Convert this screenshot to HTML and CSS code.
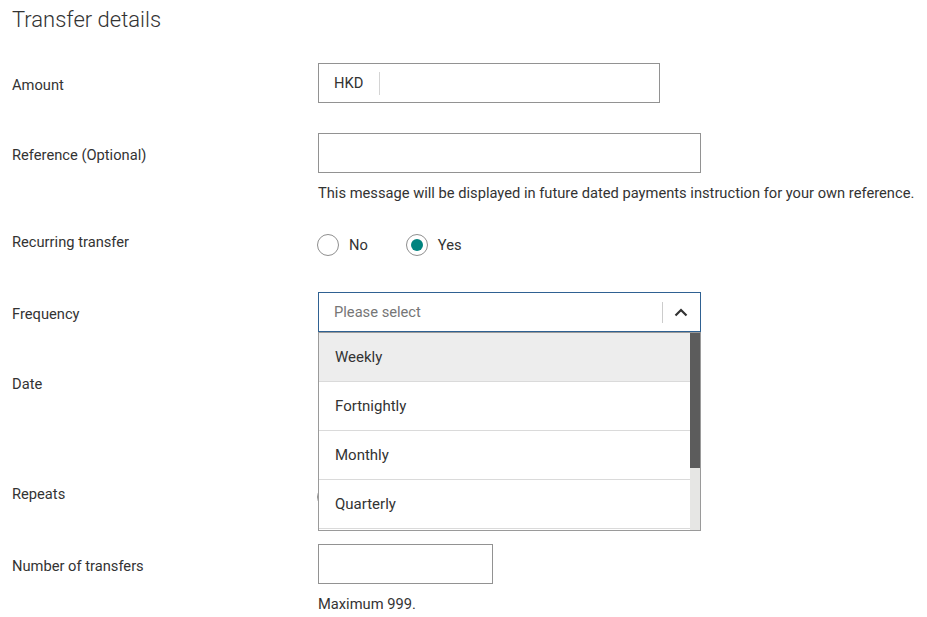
FILE: index.html
```html
<!DOCTYPE html>
<html lang="en">
<head>
<meta charset="utf-8">
<title>Transfer details</title>
<link rel="stylesheet" href="styles.css">
</head>
<body>
<main class="page">
  <h1 class="title">Transfer details</h1>
  <div class="form">
    <div class="row row-amount">
      <div class="label label-input">Amount</div>
      <div class="field">
        <div class="input input-amount">
          <span class="ccy">HKD</span>
          <span class="ccy-sep"></span>
        </div>
      </div>
    </div>

    <div class="row row-ref">
      <div class="label label-input">Reference (Optional)</div>
      <div class="field">
        <div class="input input-wide"></div>
        <p class="help">This message will be displayed in future dated payments instruction for your own reference.</p>
      </div>
    </div>

    <div class="row row-radio">
      <div class="label label-radio">Recurring transfer</div>
      <div class="field">
        <div class="radios">
          <span class="radio-opt"><span class="radio"></span><span class="radio-text">No</span></span>
          <span class="radio-opt"><span class="radio radio-on"></span><span class="radio-text">Yes</span></span>
        </div>
      </div>
    </div>

    <div class="row row-freq">
      <div class="label label-input">Frequency</div>
      <div class="field">
        <div class="select-wrap">
          <div class="select">
            <span class="placeholder">Please select</span>
            <span class="select-sep"></span>
            <span class="chev">
              <svg width="14" height="9" viewBox="0 0 14 9"><path d="M1.5 7.5 L7 2 L12.5 7.5" fill="none" stroke="#333" stroke-width="2.2"/></svg>
            </span>
          </div>
          <div class="menu">
            <ul class="menu-list">
              <li class="menu-item menu-item-active">Weekly</li>
              <li class="menu-item">Fortnightly</li>
              <li class="menu-item">Monthly</li>
              <li class="menu-item">Quarterly</li>
              <li class="menu-item"></li>
            </ul>
            <div class="scrollbar"><div class="thumb"></div></div>
          </div>
        </div>
      </div>
    </div>

    <div class="row row-date">
      <div class="label label-input">Date</div>
      <div class="field date-field">
        <div class="input input-short"></div>
      </div>
    </div>

    <div class="row row-radio">
      <div class="label label-radio">Repeats</div>
      <div class="field">
        <div class="radios">
          <span class="radio-opt"><span class="radio"></span></span>
        </div>
      </div>
    </div>

    <div class="row row-num">
      <div class="label label-input">Number of transfers</div>
      <div class="field">
        <div class="input input-short"></div>
        <p class="help">Maximum 999.</p>
      </div>
    </div>
  </div>
</main>
</body>
</html>
```

FILE: styles.css
```css
* { box-sizing: border-box; }

html, body {
  margin: 0;
  padding: 0;
  background: #ffffff;
}

body {
  font-family: Roboto, "Liberation Sans", Arial, sans-serif;
  color: #333333;
  font-size: 14.7px;
}

.page {
  padding: 6px 0 0 12px;
  width: 927px;
  height: 617px;
  overflow: hidden;
}

.title {
  margin: 0;
  font-size: 22px;
  line-height: 28px;
  font-weight: 300;
  color: #333333;
}

.form {
  display: flex;
  flex-direction: column;
  gap: 30px;
  margin-top: 29px;
}

.row {
  display: grid;
  grid-template-columns: 306px 1fr;
  align-items: start;
}

.label {
  font-size: 14.7px;
  color: #333333;
}

.label-input { line-height: 44px; height: 40px; }
.label-radio { line-height: 22px; }

.field { position: relative; }

.input {
  height: 40px;
  border: 1px solid #929292;
  background: #fff;
}

.input-amount {
  width: 342px;
  display: flex;
  align-items: center;
  padding-left: 15px;
}

.ccy { font-size: 14.7px; color: #333; }

.ccy-sep {
  width: 1px;
  height: 23px;
  background: #d4d4d4;
  margin-left: 16px;
}

.input-wide { width: 383px; }
.input-short { width: 175px; }

.help {
  margin: 12px 0 0;
  font-size: 14.7px;
  line-height: 16px;
  color: #333333;
}

.radios {
  display: flex;
  align-items: center;
  padding: 3px 0 6px;
  margin-left: -1px;
}

.radio-opt {
  display: flex;
  align-items: center;
  margin-right: 38px;
}

.radio {
  width: 22px;
  height: 22px;
  border-radius: 50%;
  border: 1px solid #8f8f8f;
  background: #fff;
  display: flex;
  align-items: center;
  justify-content: center;
}

.radio-on::after {
  content: "";
  width: 12px;
  height: 12px;
  border-radius: 50%;
  background: #00847f;
}

.radio-text {
  margin-left: 10px;
  font-size: 14.7px;
  color: #333;
}

.select-wrap {
  position: relative;
  width: 383px;
}

.select {
  height: 40px;
  border: 1px solid #2f6192;
  display: flex;
  align-items: center;
  padding-left: 15px;
  background: #fff;
}

.placeholder {
  flex: 1;
  font-size: 14.7px;
  color: #767676;
}

.select-sep {
  width: 1px;
  height: 21px;
  background: #cccccc;
}

.chev {
  width: 37px;
  display: flex;
  justify-content: center;
  align-items: center;
  padding-right: 1px;
}

.chev svg { display: block; }

.menu {
  position: absolute;
  top: 40px;
  left: 0;
  width: 383px;
  height: 199px;
  border: 1px solid #9a9a9a;
  background: #fff;
  display: flex;
  z-index: 5;
}

.menu-list {
  flex: 1;
  list-style: none;
  margin: 0;
  padding: 0;
  overflow: hidden;
}

.menu-item {
  height: 49px;
  border-bottom: 1px solid #dadada;
  padding-left: 16px;
  display: flex;
  align-items: center;
  font-size: 15px;
  color: #333;
}

.menu-item-active { background: #ededed; }

.scrollbar {
  width: 10px;
  background: #e6e6e4;
}

.thumb {
  height: 135px;
  background: #5c5c5c;
}

.date-field { height: 91px; }
```
